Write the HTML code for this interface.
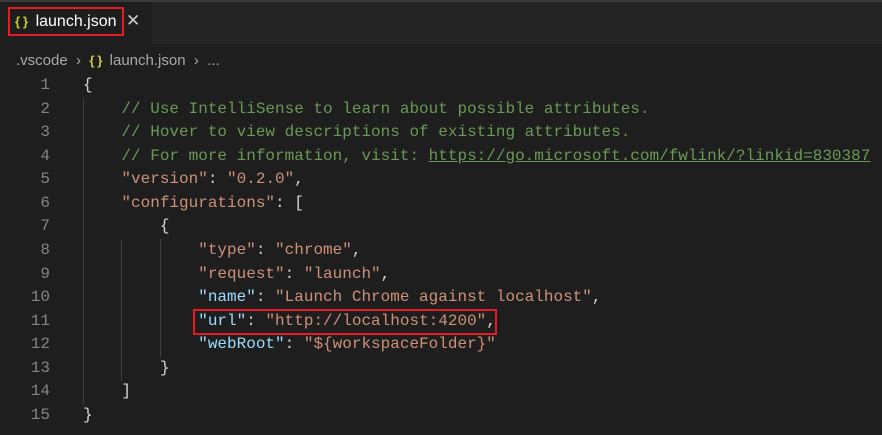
<!DOCTYPE html>
<html><head><meta charset="utf-8"><style>
*{margin:0;padding:0;box-sizing:border-box}
body{width:882px;height:435px;background:#1e1e1e;overflow:hidden;position:relative;font-family:"Liberation Sans",sans-serif}
.top{position:absolute;left:0;top:0;width:882px;height:2px;background:#3a3a3a}
.bar{position:absolute;left:0;top:2px;width:882px;height:42px;background:#252526}
.tab{position:absolute;left:0;top:2px;width:152px;height:42px;background:#1e1e1e}
.box{position:absolute;left:8px;top:7px;width:116px;height:29px;border:2.5px solid #e51c23}
.ic{color:#cbcb41;font-weight:bold;font-size:13px;letter-spacing:3px}
.tt{position:absolute;left:15px;top:13px;font-size:16px;color:#fff;white-space:nowrap}
.x{position:absolute;left:126px;top:11px;color:#ccc;font-size:17px}
.bc{position:absolute;left:16px;top:52px;font-size:15px;color:#a9a9a9;white-space:nowrap}
.code{position:absolute;left:0;top:74px;width:882px;height:361px;overflow:hidden;font-family:"Liberation Mono",monospace;font-size:16px}
.ln{height:23.57px;line-height:23.57px;white-space:pre;position:relative;width:882px}
.n{position:absolute;left:8px;color:#858585;width:42px;text-align:right}
.t{position:absolute;left:83px;color:#d4d4d4}
.c{color:#6a9955}.u{text-decoration:underline}
.k{color:#9cdcfe}.s{color:#ce9178}
.g{position:absolute;width:1px;background:#404040}
.rb{position:absolute;left:193px;top:309px;width:304px;height:26px;border:2.5px solid #e51c23}
</style></head><body>
<div class="top"></div><div class="bar"></div><div class="tab"></div>
<div class="box"></div>
<div class="tt"><span class="ic">{}</span>&nbsp;launch.json</div>
<div class="x">✕</div>
<div class="bc">.vscode &nbsp;›&nbsp; <span class="ic">{}</span> launch.json &nbsp;›&nbsp; ...</div>
<div class="g" style="left:83px;top:98px;height:307px"></div>
<div class="g" style="left:121px;top:239px;height:142px"></div>
<div class="g" style="left:160px;top:239px;height:118px"></div>
<div class="code">
<div class="ln"><span class="n">1</span><span class="t">{</span></div>
<div class="ln"><span class="n">2</span><span class="t">    <span class="c">// Use IntelliSense to learn about possible attributes.</span></span></div>
<div class="ln"><span class="n">3</span><span class="t">    <span class="c">// Hover to view descriptions of existing attributes.</span></span></div>
<div class="ln"><span class="n">4</span><span class="t">    <span class="c">// For more information, visit: <span class="u">https://go.microsoft.com/fwlink/?linkid=830387</span></span></span></div>
<div class="ln"><span class="n">5</span><span class="t">    <span class="s">"version"</span>: <span class="s">"0.2.0"</span>,</span></div>
<div class="ln"><span class="n">6</span><span class="t">    <span class="s">"configurations"</span>: [</span></div>
<div class="ln"><span class="n">7</span><span class="t">        {</span></div>
<div class="ln"><span class="n">8</span><span class="t">            <span class="s">"type"</span>: <span class="s">"chrome"</span>,</span></div>
<div class="ln"><span class="n">9</span><span class="t">            <span class="s">"request"</span>: <span class="s">"launch"</span>,</span></div>
<div class="ln"><span class="n">10</span><span class="t">            <span class="k">"name"</span>: <span class="s">"Launch Chrome against localhost"</span>,</span></div>
<div class="ln"><span class="n">11</span><span class="t">            <span class="k">"url"</span>: <span class="s">"http://localhost:4200"</span>,</span></div>
<div class="ln"><span class="n">12</span><span class="t">            <span class="k">"webRoot"</span>: <span class="s">"${workspaceFolder}"</span></span></div>
<div class="ln"><span class="n">13</span><span class="t">        }</span></div>
<div class="ln"><span class="n">14</span><span class="t">    ]</span></div>
<div class="ln"><span class="n">15</span><span class="t">}</span></div>
</div>
<div class="rb"></div>
</body></html>
